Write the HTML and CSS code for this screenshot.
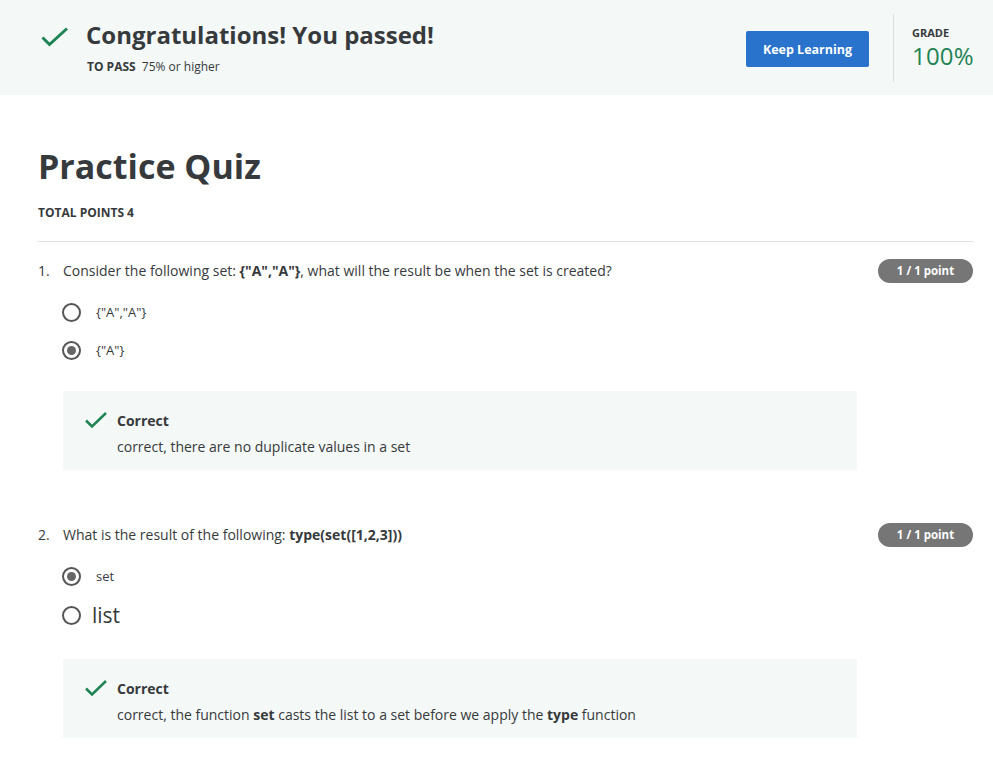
FILE: index.html
```html
<!DOCTYPE html>
<html>
<head>
<meta charset="utf-8">
<link rel="stylesheet" href="styles.css">
</head>
<body>
<header class="banner">
  <svg class="banner-check" width="28" height="20" viewBox="0 0 28 20"><path d="M1.5 10.5 L8.5 17.5 L26 1.5" fill="none" stroke="#1f8354" stroke-width="3"/></svg>
  <div class="banner-text">
    <h1 class="banner-title">Congratulations! You passed!</h1>
    <div class="to-pass"><span class="to-pass-label">TO PASS</span> 75% or higher</div>
  </div>
  <div class="spacer"></div>
  <button class="keep-btn">Keep Learning</button>
  <div class="divider"></div>
  <div class="grade">
    <div class="grade-label">GRADE</div>
    <div class="grade-value">100%</div>
  </div>
</header>

<main class="content">
  <h2 class="quiz-title">Practice Quiz</h2>
  <div class="total-points">TOTAL POINTS 4</div>
  <hr class="rule">

  <section class="question">
    <div class="q-head">
      <span class="q-num">1.</span>
      <span class="q-text">Consider the following set: <b>{"A","A"}</b>, what will the result be when the set is created?</span>
      <span class="badge">1 / 1 point</span>
    </div>
    <div class="options">
      <div class="option"><span class="radio"></span><span class="opt-text">{"A","A"}</span></div>
      <div class="option"><span class="radio checked"></span><span class="opt-text">{"A"}</span></div>
    </div>
    <div class="feedback">
      <svg class="fb-check" width="22" height="16" viewBox="0 0 22 16"><path d="M1 8.5 L7 14.5 L21 1" fill="none" stroke="#1f8354" stroke-width="2.5"/></svg>
      <div>
        <div class="fb-title">Correct</div>
        <div class="fb-text">correct, there are no duplicate values in a set</div>
      </div>
    </div>
  </section>

  <section class="question q2">
    <div class="q-head">
      <span class="q-num">2.</span>
      <span class="q-text">What is the result of the following: <b>type(set([1,2,3]))</b></span>
      <span class="badge">1 / 1 point</span>
    </div>
    <div class="options">
      <div class="option"><span class="radio checked"></span><span class="opt-text">set</span></div>
      <div class="option big"><span class="radio"></span><span class="opt-text">list</span></div>
    </div>
    <div class="feedback">
      <svg class="fb-check" width="22" height="16" viewBox="0 0 22 16"><path d="M1 8.5 L7 14.5 L21 1" fill="none" stroke="#1f8354" stroke-width="2.5"/></svg>
      <div>
        <div class="fb-title">Correct</div>
        <div class="fb-text">correct, the function <b>set</b> casts the list to a set before we apply the <b>type</b> function</div>
      </div>
    </div>
  </section>
</main>
</body>
</html>
```

FILE: styles.css
```css
* { box-sizing: border-box; }
body {
  margin: 0;
  font-family: "Open Sans", "DejaVu Sans", sans-serif;
  color: #373a3c;
  background: #fff;
}
.banner {
  height: 95px;
  background: #f4f8f7;
  display: flex;
  align-items: center;
  padding: 0 20px 0 41px;
}
.banner-check { flex: none; margin-top: -21px; }
.banner-text { margin-left: 17px; margin-top: -1px; }
.banner-title {
  margin: 0;
  font-size: 24px;
  font-weight: 700;
  line-height: 32px;
  color: #373a3c;
}
.to-pass {
  font-size: 12px;
  line-height: 16px;
  margin-top: 8px;
  margin-left: 1px;
  color: #373a3c;
}
.to-pass-label { font-weight: 700; margin-right: 3px; }
.spacer { flex: 1; }
.keep-btn {
  width: 123px;
  height: 36px;
  border: none;
  border-radius: 2px;
  background: #2a73cc;
  color: #fff;
  font-family: inherit;
  font-size: 12.5px;
  font-weight: 700;
  padding: 0;
  margin-top: 3px;
}
.divider {
  width: 1px;
  height: 68px;
  background: #dcdcdc;
  margin-left: 24px;
}
.grade { margin-left: 18px; width: 61px; margin-top: -3px; }
.grade-label {
  font-size: 11px;
  font-weight: 700;
  line-height: 14px;
  color: #373a3c;
}
.grade-value {
  font-size: 24px;
  line-height: 22px;
  margin-top: 5px;
  color: #1f8354;
  letter-spacing: 0.2px;
}

.content { padding: 0 20px 0 38px; }
.quiz-title {
  margin: 0;
  padding-top: 142px;
  margin-top: -95px;
  font-size: 34px;
  font-weight: 700;
  line-height: 48px;
}
.total-points {
  margin-top: 15px;
  font-size: 12px;
  font-weight: 700;
  line-height: 16px;
}
.rule {
  border: none;
  border-top: 1px solid #e1e1e1;
  margin: 20px 0 0 0;
}
.question { padding-top: 17px; }
.q2 { padding-top: 53px; }
.q-head {
  display: flex;
  align-items: center;
  font-size: 14px;
  line-height: 24px;
}
.q-num { width: 25px; }
.q-text { flex: 1; }
.badge {
  width: 95px;
  height: 24px;
  border-radius: 12px;
  background: #767676;
  color: #fff;
  font-size: 11.5px;
  font-weight: 700;
  text-align: center;
  line-height: 24px;
}
.options { padding-left: 24px; margin-top: 10px; }
.option {
  display: flex;
  align-items: center;
  height: 38px;
  font-size: 13px;
}
.option.big {
  font-size: 21px;
  height: 42px;
  padding-bottom: 2px;
}
.radio {
  flex: none;
  width: 19px;
  height: 19px;
  border: 2px solid #555;
  border-radius: 50%;
  display: inline-flex;
  align-items: center;
  justify-content: center;
  margin-right: 15px;
}
.radio.checked::after {
  content: "";
  width: 9px;
  height: 9px;
  border-radius: 50%;
  background: #666;
}
.option.big .radio { margin-right: 11px; }
.feedback {
  margin: 22px 116px 0 25px;
  background: #f4f8f7;
  height: 79px;
  display: flex;
  align-items: flex-start;
  padding: 20px 0 0 22px;
}
.fb-check { flex: none; margin-right: 10px; margin-top: 1px; }
.fb-title {
  font-size: 14px;
  font-weight: 700;
  line-height: 18px;
  margin-top: 1px;
}
.fb-text {
  font-size: 14px;
  line-height: 20px;
  margin-top: 7px;
}
```
